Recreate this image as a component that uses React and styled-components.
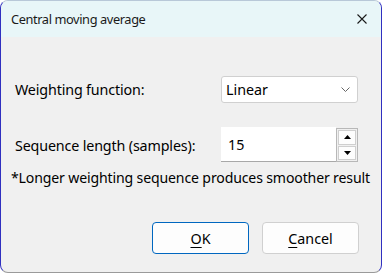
import React from "react";
import styled, { createGlobalStyle } from "styled-components";

const Global = createGlobalStyle`
  html, body { margin: 0; padding: 0; }
  body {
    width: 382px; height: 274px; overflow: hidden;
    background: #ffffff;
    font-family: "Noto Sans", "Open Sans", sans-serif;
  }
`;

const Window = styled.div`
  box-sizing: border-box;
  width: 382px;
  height: 273px;
  background: #f0f0f0;
  border: 1px solid #9a9a9a;
  border-left-color: #3030c0;
  border-right-color: #3030c0;
  border-top-color: #b8c8d8;
  border-radius: 8px;
  overflow: hidden;
  display: flex;
  flex-direction: column;
`;

const TitleBar = styled.div`
  height: 36px;
  flex: none;
  background: #e8f6f8;
  display: flex;
  align-items: center;
  justify-content: space-between;
  padding: 0 13px 0 10px;
`;

const Title = styled.span`
  font-size: 12.8px;
  letter-spacing: -0.4px;
  color: #1a1a1a;
`;

const CloseButton = styled.button`
  border: 0;
  background: transparent;
  padding: 0;
  width: 12px;
  height: 12px;
  display: flex;
  align-items: center;
  justify-content: center;
`;

const Body = styled.div`
  flex: 1;
  display: flex;
  flex-direction: column;
  padding: 39px 0 0 14px;
`;

const Grid = styled.div`
  display: grid;
  grid-template-columns: 206px 137px;
  row-gap: 25px;
  align-items: center;
`;

const Label = styled.span`
  font-size: 14.3px;
  color: #000;
  letter-spacing: -0.15px;
`;

const Select = styled.div`
  box-sizing: border-box;
  height: 27px;
  background: #fff;
  border: 1px solid #d0d0d0;
  border-radius: 3px;
  display: flex;
  align-items: center;
  justify-content: space-between;
  padding: 0 7px 0 4px;
  font-size: 14.3px;
  color: #000;
`;

const Spin = styled.div`
  display: flex;
  height: 34px;
  width: 137px;
`;

const SpinInput = styled.div`
  flex: 1;
  background: #fff;
  border-bottom: 1px solid #a8a8a8;
  display: flex;
  align-items: center;
  padding-left: 7px;
  font-size: 14.3px;
  color: #000;
  margin-top: -1px;
`;

const SpinButtons = styled.div`
  box-sizing: border-box;
  width: 22px;
  border: 1px solid #b8b8b8;
  background: #f0f0f0;
  display: flex;
  flex-direction: column;
  padding: 1px;
  gap: 1px;
`;

const SpinButton = styled.div`
  flex: 1;
  background: #fdfdfd;
  border: 1px solid #cfcfcf;
  display: flex;
  align-items: center;
  justify-content: center;
`;

const Note = styled.div`
  margin: 6px 0 0 -4px;
  font-size: 14.1px;
  color: #000;
  letter-spacing: -0.15px;
  white-space: nowrap;
`;

const Buttons = styled.div`
  display: flex;
  justify-content: flex-end;
  gap: 13px;
  padding-right: 22px;
  margin-top: 35px;
`;

const Button = styled.button`
  box-sizing: border-box;
  width: 97px;
  height: 32px;
  border-radius: 4px;
  background: #fdfdfd;
  border: 1px solid ${(p) => (p.$primary ? "#0067c0" : "#d0d0d0")};
  font-family: inherit;
  font-size: 14.3px;
  color: #000;
  padding: 0;
  u { text-decoration-thickness: 1px; text-underline-offset: 3px; }
`;

export default function App() {
  return (
    <>
      <Global />
      <Window>
        <TitleBar>
          <Title>Central moving average</Title>
          <CloseButton aria-label="Close">
            <svg width="10" height="10" viewBox="0 0 10 10">
              <path d="M0.5 0.5 L9.5 9.5 M9.5 0.5 L0.5 9.5" stroke="#1a1a1a" strokeWidth="1.1" />
            </svg>
          </CloseButton>
        </TitleBar>
        <Body>
          <Grid>
            <Label>Weighting function:</Label>
            <Select>
              <span>Linear</span>
              <svg width="9" height="5" viewBox="0 0 9 5">
                <path d="M0.5 0.5 L4.5 4.5 L8.5 0.5" fill="none" stroke="#666" strokeWidth="1" />
              </svg>
            </Select>
            <Label>Sequence length (samples):</Label>
            <Spin>
              <SpinInput>15</SpinInput>
              <SpinButtons>
                <SpinButton>
                  <svg width="7" height="4" viewBox="0 0 7 4"><path d="M0 4 L3.5 0 L7 4 Z" fill="#000" /></svg>
                </SpinButton>
                <SpinButton>
                  <svg width="7" height="4" viewBox="0 0 7 4"><path d="M0 0 L3.5 4 L7 0 Z" fill="#000" /></svg>
                </SpinButton>
              </SpinButtons>
            </Spin>
          </Grid>
          <Note>*Longer weighting sequence produces smoother result</Note>
          <Buttons>
            <Button $primary><u>O</u>K</Button>
            <Button><u>C</u>ancel</Button>
          </Buttons>
        </Body>
      </Window>
    </>
  );
}
